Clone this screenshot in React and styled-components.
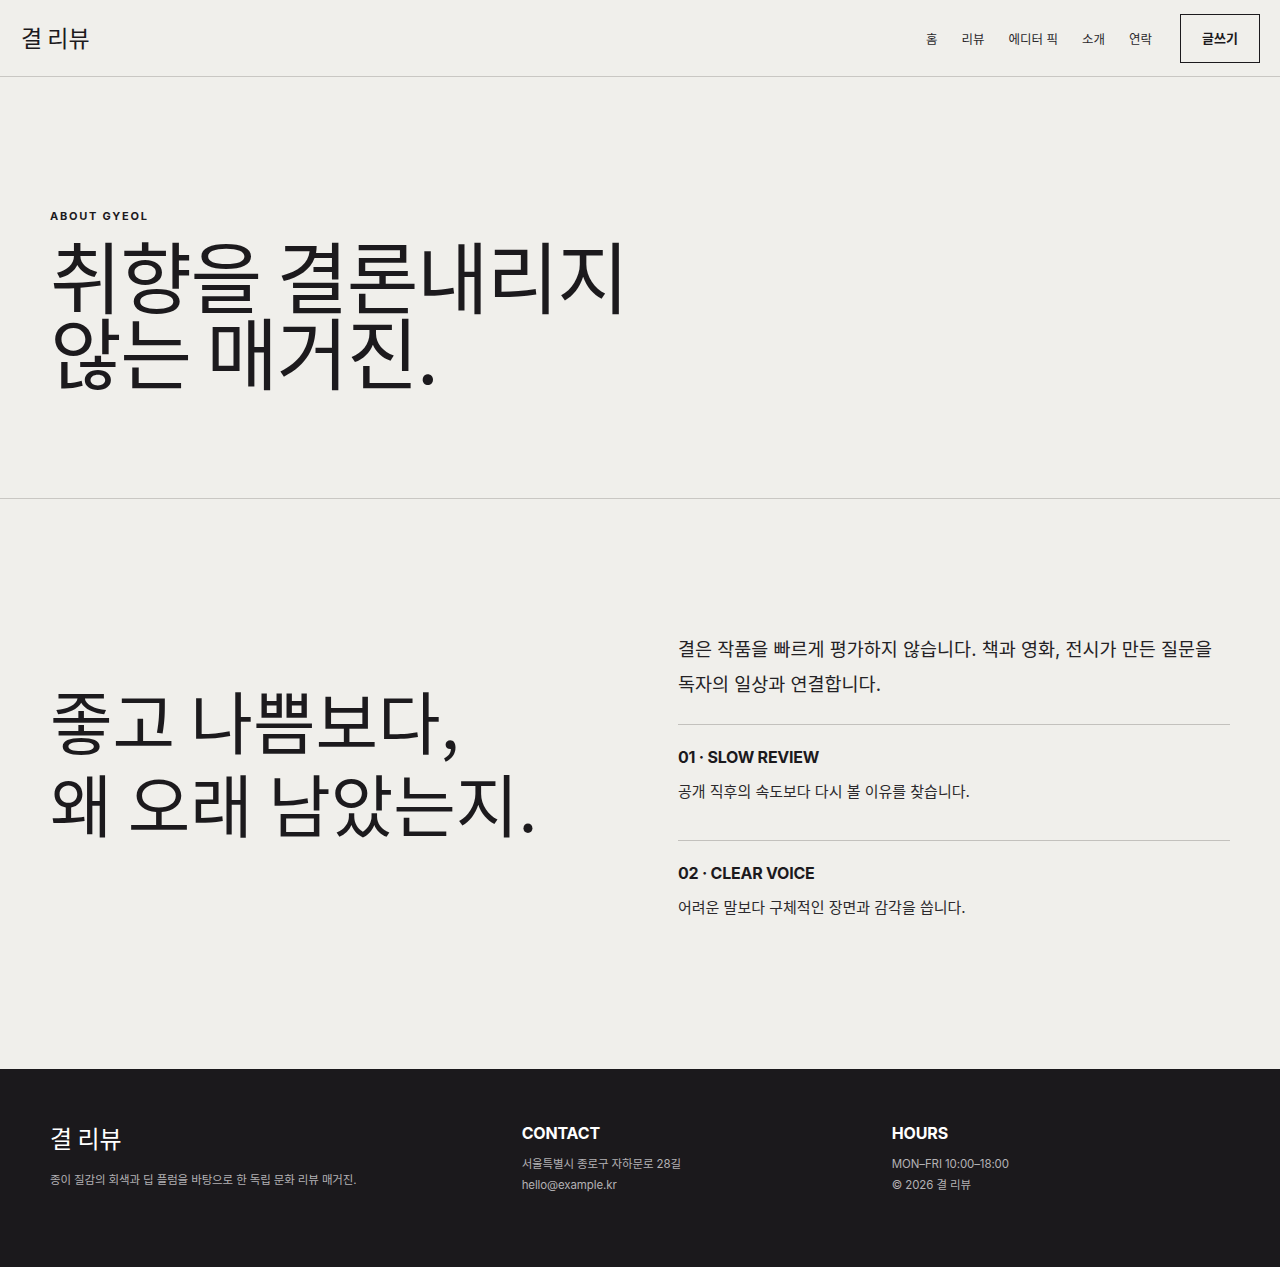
import React from "react";
import styled, { createGlobalStyle } from "styled-components";

const GlobalStyle = createGlobalStyle`
  * { box-sizing: border-box; }
  body {
    margin: 0;
    background: #f0efeb;
    color: #1c1a1d;
    font-family: "Inter", "Noto Sans CJK KR", sans-serif;
    word-break: keep-all;
  }
`;

const Header = styled.header`
  height: 77px;
  display: flex;
  align-items: center;
  justify-content: space-between;
  padding: 0 20px 0 21px;
  border-bottom: 1px solid #c9c7c3;
`;

const Logo = styled.div`
  font-family: "Noto Sans CJK KR", sans-serif;
  font-size: ${(p) => p.size || 23}px;
  color: ${(p) => p.color || "#1c1a1d"};
  line-height: 1.3;
`;

const Nav = styled.nav`
  display: flex;
  align-items: center;
  gap: 24px;
`;

const NavLink = styled.a`
  font-size: 12.5px;
  color: #2a282b;
  text-decoration: none;
`;

const WriteButton = styled.button`
  margin-left: 4px;
  background: transparent;
  border: 1px solid #1c1a1d;
  padding: 16px 20px;
  line-height: 15px;
  font-family: inherit;
  font-size: 13px;
  font-weight: 700;
  color: #1c1a1d;
  width: 80px;
`;

const Hero = styled.section`
  padding: 131px 50px 110px;
  border-bottom: 1px solid #c9c7c3;
`;

const Eyebrow = styled.div`
  font-size: 11px;
  font-weight: 700;
  letter-spacing: 0.16em;
  line-height: 16px;
  margin-bottom: 12px;
`;

const HeroTitle = styled.h1`
  margin: 0;
  font-family: "Noto Sans CJK KR", sans-serif;
  font-weight: 400;
  font-size: 78px;
  line-height: 76px;
  letter-spacing: -0.02em;
`;

const About = styled.section`
  display: grid;
  grid-template-columns: 1fr 552px;
  gap: 76px;
  align-items: center;
  padding: 133px 50px 150px;
`;

const AboutTitle = styled.h2`
  margin: 0 0 30px;
  font-family: "Noto Sans CJK KR", sans-serif;
  font-weight: 400;
  font-size: 68px;
  line-height: 83px;
`;

const Lead = styled.p`
  margin: 0 0 22px;
  font-size: 18.5px;
  line-height: 35px;
  color: #242225;
`;

const Item = styled.div`
  border-top: 1px solid #c3c1bd;
  padding: 21px 0 ${(p) => (p.last ? 0 : 37)}px;
`;

const ItemTitle = styled.h3`
  margin: 0 0 13px;
  font-size: 16px;
  line-height: 22px;
  font-weight: 700;
  letter-spacing: -0.015em;
`;

const ItemText = styled.p`
  margin: 0;
  font-size: 15px;
  line-height: 22px;
  color: #2c2a2d;
`;

const Footer = styled.footer`
  background: #1b191c;
  color: #fff;
  padding: 53px 50px 71px;
  display: grid;
  grid-template-columns: 1.3fr 1fr 1fr;
  gap: 32px;
`;

const FooterCol = styled.div`
  display: flex;
  flex-direction: column;
`;

const FooterHeading = styled.h4`
  margin: 0 0 10px;
  font-size: 16px;
  line-height: 22px;
  font-weight: 700;
  letter-spacing: -0.01em;
`;

const FooterText = styled.p`
  margin: ${(p) => p.mt || 0}px 0 0;
  font-size: 11.5px;
  line-height: 21px;
  letter-spacing: -0.01em;
  color: #b3b1b4;
`;

export default function App() {
  return (
    <>
      <GlobalStyle />
      <Header>
        <Logo>결 리뷰</Logo>
        <Nav>
          <NavLink href="#">홈</NavLink>
          <NavLink href="#">리뷰</NavLink>
          <NavLink href="#">에디터 픽</NavLink>
          <NavLink href="#">소개</NavLink>
          <NavLink href="#">연락</NavLink>
          <WriteButton>글쓰기</WriteButton>
        </Nav>
      </Header>

      <Hero>
        <Eyebrow>ABOUT GYEOL</Eyebrow>
        <HeroTitle>
          취향을 결론내리지
          <br />
          않는 매거진.
        </HeroTitle>
      </Hero>

      <About>
        <AboutTitle>
          좋고 나쁨보다,
          <br />
          왜 오래 남았는지.
        </AboutTitle>
        <div>
          <Lead>
            결은 작품을 빠르게 평가하지 않습니다. 책과 영화, 전시가 만든 질문을
            독자의 일상과 연결합니다.
          </Lead>
          <Item>
            <ItemTitle>01 · SLOW REVIEW</ItemTitle>
            <ItemText>공개 직후의 속도보다 다시 볼 이유를 찾습니다.</ItemText>
          </Item>
          <Item last>
            <ItemTitle>02 · CLEAR VOICE</ItemTitle>
            <ItemText>어려운 말보다 구체적인 장면과 감각을 씁니다.</ItemText>
          </Item>
        </div>
      </About>

      <Footer>
        <FooterCol>
          <Logo size={24} color="#fff">결 리뷰</Logo>
          <FooterText mt={17}>
            종이 질감의 회색과 딥 플럼을 바탕으로 한 독립 문화 리뷰 매거진.
          </FooterText>
        </FooterCol>
        <FooterCol>
          <FooterHeading>CONTACT</FooterHeading>
          <FooterText>서울특별시 종로구 자하문로 28길</FooterText>
          <FooterText>hello@example.kr</FooterText>
        </FooterCol>
        <FooterCol>
          <FooterHeading>HOURS</FooterHeading>
          <FooterText>MON–FRI 10:00–18:00</FooterText>
          <FooterText>© 2026 결 리뷰</FooterText>
        </FooterCol>
      </Footer>
    </>
  );
}
